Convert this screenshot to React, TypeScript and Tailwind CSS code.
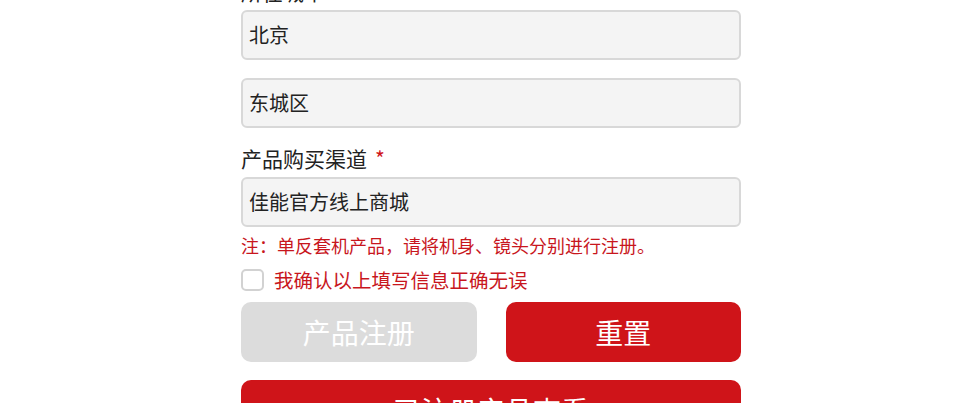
import { useState } from "react";

const fontStack = {
  fontFamily: '"Noto Sans CJK SC", "Noto Sans", sans-serif',
};

interface FieldProps {
  value: string;
}

const Field = ({ value }: FieldProps) => (
  <div className="h-[50px] w-full rounded-[6px] border-2 border-[#d8d8d8] bg-[#f4f4f4] px-[6px] flex items-center text-[20px] text-[#222]">
    {value}
  </div>
);

const Label = ({ text }: { text: string }) => (
  <div className="h-[28px] flex items-center text-[21px] text-[#222] mb-[4px]">
    {text}
    <span className="ml-[8px] text-[#cf1419]">*</span>
  </div>
);

export default function App() {
  const [checked, setChecked] = useState(false);

  return (
    <div className="min-h-screen bg-white overflow-hidden" style={fontStack}>
      <div className="ml-[241px] w-[500px] -mt-[22px] flex flex-col">
        <Label text="所在城市" />
        <Field value="北京" />
        <div className="mt-[18px]">
          <Field value="东城区" />
        </div>
        <div className="mt-[17px]">
          <Label text="产品购买渠道" />
        </div>
        <Field value="佳能官方线上商城" />
        <p className="mt-[6px] text-[18px] leading-[24px] text-[#c8161d]">
          注：单反套机产品，请将机身、镜头分别进行注册。
        </p>
        <label className="mt-[11px] h-[24px] flex items-center gap-[10px] cursor-pointer">
          <span
            onClick={() => setChecked(!checked)}
            className={`h-[22px] w-[23px] rounded-[5px] border-2 border-[#d2d2d2] ${
              checked ? "bg-[#cf1419]" : "bg-white"
            }`}
          ></span>
          <span className="text-[19.5px] leading-[24px] text-[#c8161d]">
            我确认以上填写信息正确无误
          </span>
        </label>
        <div className="mt-[10px] flex gap-[29px]">
          <button className="h-[60px] flex-1 rounded-[10px] bg-[#dcdcdc] text-[28px] text-white">
            产品注册
          </button>
          <button className="h-[60px] flex-1 rounded-[10px] bg-[#cf1419] text-[28px] text-white">
            重置
          </button>
        </div>
        <button className="mt-[18px] h-[60px] w-full rounded-[10px] bg-[#cf1419] text-[28px] text-white">
          已注册产品查看
        </button>
      </div>
    </div>
  );
}
